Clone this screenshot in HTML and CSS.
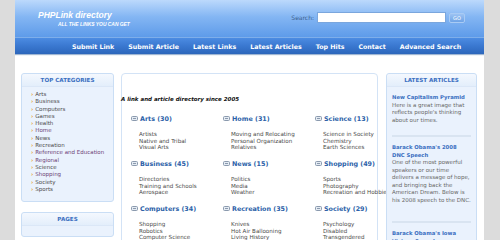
FILE: index.html
```html
<!DOCTYPE html>
<html lang="en">
<head>
    <meta charset="UTF-8">
    <title>PHPLink directory</title>
    <link rel="stylesheet" href="styles.css">
</head>
<body>
<div class="page">
    <header class="top">
        <div class="brand">
            <div class="logo">PHPLink directory</div>
            <div class="tagline">ALL THE LINKS YOU CAN GET</div>
        </div>
        <form class="search">
            <label for="q">Search:</label>
            <input type="text" id="q">
            <button type="button">GO</button>
        </form>
    </header>

    <nav class="menu">
        <a href="#">Submit Link</a>
        <a href="#">Submit Article</a>
        <a href="#">Latest Links</a>
        <a href="#">Latest Articles</a>
        <a href="#">Top Hits</a>
        <a href="#">Contact</a>
        <a href="#">Advanced Search</a>
    </nav>

    <div class="columns">
        <div class="left-col">
            <div class="box">
                <h3 class="box-title">TOP CATEGORIES</h3>
                <ul class="cat-list">
                    <li><a href="#">Arts</a></li>
                    <li><a href="#">Business</a></li>
                    <li><a href="#">Computers</a></li>
                    <li><a href="#">Games</a></li>
                    <li><a href="#">Health</a></li>
                    <li><a href="#" class="visited">Home</a></li>
                    <li><a href="#">News</a></li>
                    <li><a href="#">Recreation</a></li>
                    <li><a href="#" class="visited">Reference and Education</a></li>
                    <li><a href="#" class="visited">Regional</a></li>
                    <li><a href="#">Science</a></li>
                    <li><a href="#" class="visited">Shopping</a></li>
                    <li><a href="#">Society</a></li>
                    <li><a href="#">Sports</a></li>
                </ul>
            </div>
            <div class="box pages">
                <h3 class="box-title">PAGES</h3>
            </div>
        </div>

        <main class="content">
            <p class="intro">A link and article directory since 2005</p>
            <div class="cat-grid" id="catGrid"></div>
        </main>

        <div class="right-col">
            <div class="box">
                <h3 class="box-title">LATEST ARTICLES</h3>
                <div class="article">
                    <a href="#" class="art-title">New Capitalism Pyramid</a>
                    <p>Here is a great image that reflects people's thinking about our times.</p>
                </div>
                <div class="article long">
                    <a href="#" class="art-title">Barack Obama's 2008 DNC Speech</a>
                    <p>One of the most powerful speakers or our time delivers a message of hope, and bringing back the American Dream. Below is his 2008 speech to the DNC.</p>
                </div>
                <div class="article">
                    <a href="#" class="art-title">Barack Obama's Iowa Victory Speech</a>
                </div>
            </div>
        </div>
    </div>
</div>

<script>
    const categories = [
        { name: "Arts", count: 30, subs: ["Artists", "Native and Tribal", "Visual Arts"] },
        { name: "Home", count: 31, subs: ["Moving and Relocating", "Personal Organization", "Relatives"] },
        { name: "Science", count: 13, subs: ["Science in Society", "Chemistry", "Earth Sciences"] },
        { name: "Business", count: 45, subs: ["Directories", "Training and Schools", "Aerospace"] },
        { name: "News", count: 15, subs: ["Politics", "Media", "Weather"] },
        { name: "Shopping", count: 49, subs: ["Sports", "Photography", "Recreation and Hobbies"] },
        { name: "Computers", count: 34, subs: ["Shopping", "Robotics", "Computer Science"] },
        { name: "Recreation", count: 35, subs: ["Knives", "Hot Air Ballooning", "Living History"] },
        { name: "Society", count: 29, subs: ["Psychology", "Disabled", "Transgendered"] }
    ];

    const grid = document.getElementById("catGrid");
    const icon = `<svg class="cat-icon" width="7" height="5" viewBox="0 0 7 5"><rect x="0.5" y="0.5" width="6" height="4" rx="1" fill="#e4ebf3" stroke="#8b9aae"/><line x1="2" y1="2.5" x2="5" y2="2.5" stroke="#8b9aae"/></svg>`;

    categories.forEach(cat => {
        const div = document.createElement("div");
        div.className = "cat";
        div.innerHTML = `
            <div class="cat-head">${icon}<a href="#">${cat.name} (${cat.count})</a></div>
            <ul class="sub-list">
                ${cat.subs.map(s => `<li><a href="#">${s}</a></li>`).join("")}
            </ul>
        `;
        grid.appendChild(div);
    });
</script>
</body>
</html>
```

FILE: styles.css
```css
body {
    margin: 0;
    background-color: #dcdcdc;
    font-family: "DejaVu Sans", Verdana, sans-serif;
    overflow: hidden;
}

a {
    text-decoration: none;
}

.page {
    width: 469px;
    height: 240px;
    margin-left: 15px;
    background-color: #fff;
    overflow: hidden;
}

/* header */
.top {
    height: 37px;
    display: flex;
    justify-content: space-between;
    background: linear-gradient(#bcd9fc, #84b6f3 45%, #5e9be9);
}

.brand {
    padding: 10px 0 0 23px;
    font-family: "Liberation Sans", Arial, sans-serif;
    font-style: italic;
    font-weight: bold;
    color: #fff;
}

.logo {
    font-size: 8.5px;
    line-height: 11px;
}

.tagline {
    font-size: 4.9px;
    line-height: 6px;
    margin: 1px 0 0 20px;
}

.search {
    display: flex;
    align-items: center;
    gap: 3px;
    margin: 12px 19px 0 0;
    height: 11px;
}

.search label {
    font-size: 6px;
    color: #3d5f8e;
}

.search input {
    width: 129px;
    height: 11px;
    padding: 0;
    border: 1px solid #7aa6dd;
    box-sizing: border-box;
    background: #fff;
}

.search button {
    width: 16px;
    height: 10px;
    padding: 0;
    font-size: 5px;
    font-family: "DejaVu Sans", sans-serif;
    color: #fff;
    background: linear-gradient(#9cc3f3, #6ea3e6);
    border: 1px solid #a9cbf4;
    border-radius: 2px;
}

/* menu */
.menu {
    height: 17px;
    display: flex;
    align-items: center;
    gap: 14px;
    padding-left: 57px;
    background: linear-gradient(#4c8ce2, #3a78d0 50%, #2c66bb);
    border-top: 1px solid #7eaeea;
    box-sizing: border-box;
    box-shadow: 0 1px 1px #9fb6d3;
}

.menu a {
    color: #fff;
    font-weight: bold;
    font-size: 6.3px;
    white-space: nowrap;
}

/* columns */
.columns {
    display: flex;
    align-items: flex-start;
    padding: 19px 0 0 6px;
}

.left-col {
    width: 93px;
    display: flex;
    flex-direction: column;
    gap: 10px;
}

.right-col {
    width: 91px;
    margin-left: 8px;
}

.box {
    background-color: #eaf2fd;
    border: 1px solid #cadef5;
    border-radius: 3px;
    box-sizing: border-box;
}

.box-title {
    margin: 0;
    height: 12px;
    line-height: 12px;
    text-align: center;
    font-size: 5.6px;
    color: #3a6fc1;
    background: linear-gradient(#f4f8fe, #e3eefb);
    border-bottom: 1px solid #dbe7f7;
    border-radius: 3px 3px 0 0;
}

.cat-list {
    list-style: none;
    margin: 0;
    padding: 4px 0 8px 9px;
}

.cat-list li {
    font-size: 5.5px;
    line-height: 7.3px;
}

.cat-list li::before {
    content: "\203A";
    color: #e89a1c;
    font-weight: bold;
    margin-right: 2px;
}

.cat-list a {
    color: #4a4a4a;
}

.cat-list a.visited {
    color: #6c3f76;
}

.pages {
    height: 25px;
}

/* main content */
.content {
    width: 257px;
    height: 200px;
    margin-left: 7px;
    border: 1px solid #d3e3f6;
    border-radius: 4px;
    box-sizing: border-box;
}

.intro {
    margin: 22px 0 0 -1px;
    font-size: 5.5px;
    font-weight: bold;
    font-style: italic;
    color: #111;
}

.cat-grid {
    display: grid;
    grid-template-columns: repeat(3, 92px);
    grid-auto-rows: 45px;
    padding: 12px 0 0 9px;
}

.cat-head {
    display: flex;
    align-items: center;
    gap: 1px;
    height: 9px;
}

.cat-head a {
    color: #2c5fa8;
    font-weight: bold;
    font-size: 6.4px;
}

.cat-icon {
    margin-right: 1px;
}

.sub-list {
    list-style: none;
    margin: 0;
    padding: 8px 0 0 8px;
}

.sub-list li {
    font-size: 5.6px;
    line-height: 6.5px;
    white-space: nowrap;
}

.sub-list a {
    color: #4a4a4a;
}

/* latest articles */
.article {
    margin: 0 5px;
    padding: 7px 0 11px;
    border-bottom: 2px solid #d9e4f1;
}

.article.long {
    padding-bottom: 17px;
}

.article:last-child {
    border-bottom: none;
}

.art-title {
    display: block;
    font-size: 5.3px;
    line-height: 7.5px;
    font-weight: bold;
    color: #3a6fc1;
}

.article p {
    margin: 0;
    font-size: 5.5px;
    line-height: 7.5px;
    color: #666;
}
```
